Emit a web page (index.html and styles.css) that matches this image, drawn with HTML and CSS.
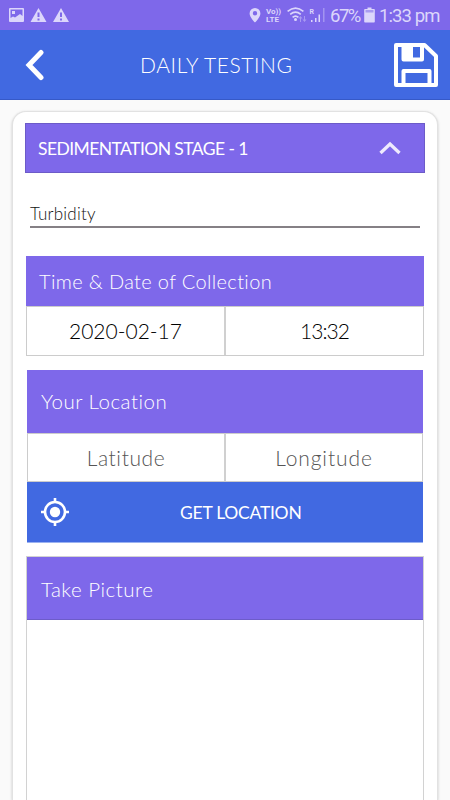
FILE: index.html
```html
<!DOCTYPE html>
<html lang="en">
<head>
<meta charset="utf-8">
<title>Daily Testing</title>
<link rel="stylesheet" href="styles.css">
</head>
<body>
<div class="status">
  <svg class="notifications" width="70" height="30" viewBox="0 0 70 30">
    <path fill-rule="evenodd" d="M10 8H23a1 1 0 0 1 1 1V21a1 1 0 0 1-1 1H10a1 1 0 0 1-1-1V9a1 1 0 0 1 1-1ZM10.500 9.500V18L13 16.500 15 17.500 20 14 22.500 16V9.500ZM12 11h3v3h-3Z"/>
    <path fill-rule="evenodd" d="M38.500 8 46.500 22H30.500ZM37.500 12.500V17h2V12.500ZM37.500 18.500v2h2v-2Z"/>
    <path fill-rule="evenodd" d="M61 8 69 22H53ZM60 12.500V17h2V12.500ZM60 18.500v2h2v-2Z"/>
  </svg>
  <div class="indicators">
    <svg width="12" height="30" viewBox="0 0 12 30"><path fill-rule="evenodd" d="M6 8a5.400 5.400 0 0 1 5.400 5.400C11.400 17 6 22.500 6 22.500S.6 17 .6 13.400A5.400 5.400 0 0 1 6 8Zm0 3a2.200 2.200 0 1 0 0 4.400A2.200 2.200 0 0 0 6 11Z"/></svg>
    <div class="volte"><span>Vo))</span><span>LTE</span></div>
    <svg class="signal" width="38" height="30" viewBox="0 0 38 30">
      <g fill="none" stroke="#dcd6fb" stroke-width="1.600"><path d="M.6 11.400Q8.500 4.800 16.400 11.400M3.200 14.400Q8.500 10 13.800 14.400M5.600 17.400Q8.500 14.800 11.400 17.400"/></g>
      <circle cx="8.500" cy="19.500" r="1.500"/>
      <path opacity=".45" d="M13.500 16 15.500 18.500H14V22H13V18.500H11.500ZM17.500 22 15.500 19.500H17V16H18V19.500H19.500Z"/>
      <path d="M24 20h1.500v2H24Zm4-2h1.500v4H28Z"/><path d="M31.500 14.500H33V22h-1.500Z"/>
      <path opacity=".4" d="M36 8h1.500v14H36Z"/>
      <text x="22.500" y="13.500">R</text>
    </svg>
    <span class="percent">67%</span>
    <svg width="11" height="30" viewBox="0 0 11 30"><path d="M3.500 7.500h4V9H10a.8.8 0 0 1 .8.8V21.700a.8.8 0 0 1-.8.800H1a.8.8 0 0 1-.8-.8V9.800A.8.8 0 0 1 1 9H3.500Z"/><path fill="#a99bf1" d="M1.500 10h8v2.500h-8Z"/></svg>
    <span class="clock">1:33 pm</span>
  </div>
</div>
<header class="bar">
  <svg width="20" height="32" viewBox="0 0 20 32"><path class="line" stroke-width="5" stroke-linecap="round" d="M16 3.500 4 16 16 28.500"/></svg>
  <h1>DAILY TESTING</h1>
  <svg width="46" height="46" viewBox="0 0 46 46"><path class="line" stroke-width="4" stroke-linejoin="round" d="M3 3H31.500L43 14V43H3ZM10.500 3V17.500H29V3M10.500 42V29H36.500V42"/><path class="solid" d="M10 3h10v14H10Z"/></svg>
</header>
<main class="card">
  <div class="stage"><span>SEDIMENTATION STAGE - 1</span>
    <svg width="22" height="16" viewBox="0 0 22 16"><path class="line pale" stroke-width="3.300" d="M1.500 13 11 4 20.500 13"/></svg>
  </div>
  <div class="field">Turbidity</div>
  <section class="collection">
    <h2>Time &amp; Date of Collection</h2>
    <div class="pair"><span class="date">2020-02-17</span><span class="time">13:32</span></div>
  </section>
  <section class="location">
    <h2>Your Location</h2>
    <div class="pair hint"><span>Latitude</span><span class="longitude">Longitude</span></div>
    <div class="get">
      <svg width="28" height="28" viewBox="0 0 28 28"><circle class="line" cx="14" cy="14" r="10" stroke-width="2.600"/><circle class="solid" cx="14" cy="14" r="5.200"/><path class="line" stroke-width="2.600" d="M14 0V4M14 24v4M0 14H4M24 14h4"/></svg>
      <span>GET LOCATION</span>
    </div>
  </section>
  <section class="picture"><h2>Take Picture</h2></section>
</main>
</body>
</html>
```

FILE: styles.css
```css
* { box-sizing: border-box; }
body { margin: 0; width: 450px; height: 800px; overflow: hidden; background: #fafafa; font-family: Lato, sans-serif; font-weight: 300; display: flex; flex-direction: column; }
h1, h2 { margin: 0; font-weight: 300; }
svg { display: block; flex: none; }
.line { fill: none; stroke: #fff; }
.pale { stroke: #eeeafd; }
.solid { fill: #fff; }
.status { height: 30px; flex: none; background: #7e68ea; color: #dcd6fb; fill: #dcd6fb; display: flex; justify-content: space-between; padding-right: 10px; font-family: Roboto, sans-serif; font-weight: 400; }
.indicators { display: flex; align-items: center; white-space: nowrap; }
.volte { display: flex; flex-direction: column; font-size: 8px; line-height: 8px; font-weight: 700; width: 16px; margin-left: 5px; padding-top: 1px; }
.signal { margin-left: 5px; }
.signal text { font-size: 7px; font-weight: 700; }
.percent { font-size: 18.5px; margin-left: 5px; width: 30px; letter-spacing: -1.5px; margin-right: 4px; padding-top: 1px; }
.clock { font-size: 18.5px; margin-left: 4px; width: 61px; letter-spacing: -.9px; padding-top: 1px; }
.bar { height: 70px; flex: none; background: #4169e1; border-bottom: 1px solid #3659c7; display: flex; align-items: center; padding: 0 11px 0 25px; color: #fff; }
h1 { flex: 1; font-size: 21px; letter-spacing: .6px; padding-left: 95px; }
.card { flex: 1; margin: 11px 12px 0; background: #fff; border: 1px solid #e2e2e2; border-bottom: 0; border-radius: 14px 14px 0 0; box-shadow: 0 1px 3px #0003; padding: 11px 12px 0; display: flex; flex-direction: column; }
.stage { height: 50px; flex: none; background: #7e68ea; border: 1px solid #6c5bc8; color: #fff; display: flex; align-items: center; justify-content: space-between; padding: 0 23px 0 12px; font-size: 17.5px; font-weight: 400; letter-spacing: -.57px; }
.field { height: 38px; flex: none; margin: 17px 5px 0 5px; border-bottom: 2px solid #858085; padding-top: 14px; font-size: 17px; letter-spacing: .2px; line-height: 20px; color: #111; }
section { flex: none; }
h2 { background: #7e68ea; color: #fff; display: flex; align-items: center; font-size: 20.5px; letter-spacing: .5px; padding-left: 14px; padding-bottom: 1px; height: 63px; }
.collection { margin: 28px 1px 0; }
.collection h2 { height: 50px; padding-left: 13px; padding-bottom: 0; font-size: 20px; letter-spacing: .36px; }
.pair { height: 50px; display: grid; grid-template-columns: 197px 1fr; border: 1px solid #ccc; font-size: 21px; color: #000; }
.pair span { display: flex; align-items: center; justify-content: center; padding-bottom: 1px; }
.pair span + span { border-left: 2px solid #d0d0d0; }
.time { letter-spacing: -1px; }
.location { margin: 14px 2px 0; }
.hint { color: #555; letter-spacing: .6px; height: 49px; grid-template-columns: 196px 1fr; }
.hint span { padding-bottom: 0; }
.longitude { letter-spacing: .9px; }
.get { height: 61px; background: #4169e1; border-bottom: 1px solid #9bb2f1; color: #fff; display: flex; align-items: center; padding-left: 14px; font-size: 17.5px; font-weight: 400; letter-spacing: -.25px; }
.get span { margin-left: 111px; }
.picture { flex: 1; margin: 13px 1px 0; border: 1px solid #d2d2d2; border-bottom: 0; }
.picture h2 { border-bottom: 1px solid #6d5cc9; padding-top: 2px; }
```
